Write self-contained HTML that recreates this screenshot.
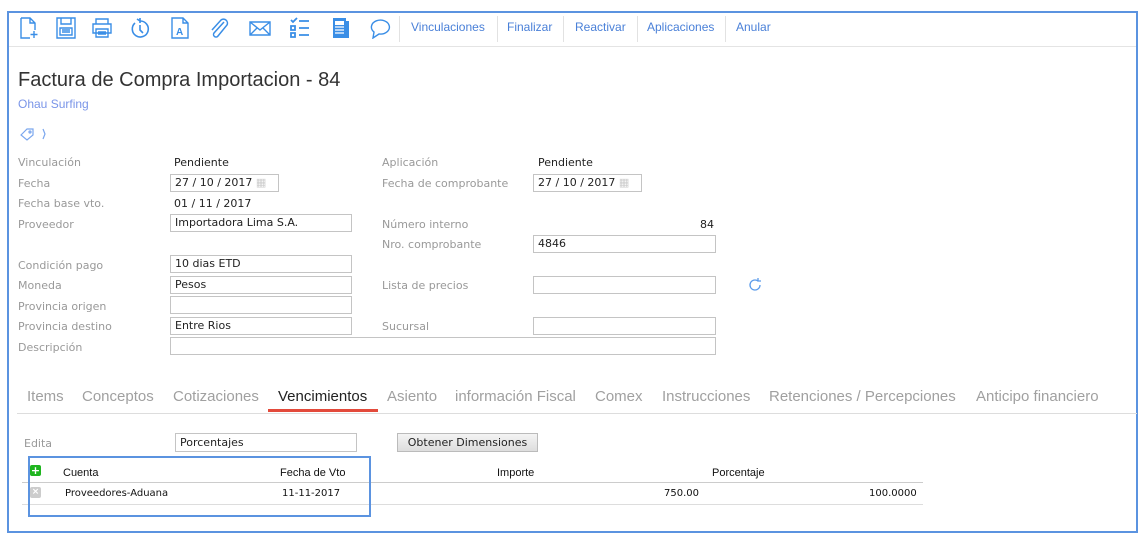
<!DOCTYPE html>
<html><head><meta charset="utf-8">
<style>
*{margin:0;padding:0;box-sizing:border-box}
body{width:1140px;height:540px;background:#fff;position:relative;overflow:hidden;font-family:"Liberation Sans",sans-serif}
.a{position:absolute;white-space:nowrap}
.frame{position:absolute;left:7px;top:11px;width:1131px;height:522px;border:2px solid #5b93e0}
.lbl{position:absolute;font:11px "DejaVu Sans",sans-serif;color:#999;white-space:nowrap}
.val{position:absolute;font:11px "DejaVu Sans",sans-serif;color:#222;white-space:nowrap}
.inp{position:absolute;height:18px;border:1px solid #c4c4c4;font:11px "DejaVu Sans",sans-serif;color:#222;padding:0 4px;line-height:16px;white-space:nowrap}
.lk{position:absolute;top:20px;font-size:12px;color:#4a80d8}
.sep{position:absolute;top:16px;width:1px;height:26px;background:#e2e2e2}
.tab{position:absolute;top:388px;font-size:15px;color:#a0a0a0}
svg.ic{position:absolute;top:17px}
.th{position:absolute;top:467px;font-size:11px;color:#111}
.td{position:absolute;top:488px;font:10px "DejaVu Sans",sans-serif;color:#111}
</style></head><body>
<div class="frame"></div>

<svg class="ic" style="left:18px" width="22" height="22" viewBox="0 0 22 22" fill="none" stroke="#3a8ee6" stroke-width="1.4"><path d="M3 1h9l5 5v7M3 1v20h9M12 1v5h5M16 14v7M12.5 17.5h7"/></svg>
<svg class="ic" style="left:55px" width="22" height="22" viewBox="0 0 22 22" fill="none" stroke="#3a8ee6" stroke-width="1.4"><path d="M2 1h18v20H2z M6 1v6h10V1 M5 11h12v7H5z M7 13h8M7 15h8"/></svg>
<svg class="ic" style="left:91px" width="22" height="22" viewBox="0 0 22 22" fill="none" stroke="#3a8ee6" stroke-width="1.4"><path d="M5 7V2h12v5 M2 7h18v9H2z M5 12h12v8H5z M7 15h8M7 17h8"/></svg>
<svg class="ic" style="left:129px" width="22" height="22" viewBox="0 0 22 22" fill="none" stroke="#3a8ee6" stroke-width="1.6"><path d="M6 6a8 8 0 1 0 5-2 M11 1v5 M8 2l3 2 M11 8v5l3 3"/></svg>
<svg class="ic" style="left:169px" width="22" height="22" viewBox="0 0 22 22" fill="none" stroke="#3a8ee6" stroke-width="1.4"><path d="M3 1h11l5 5v15H3z M14 1v5h5"/><text x="7" y="18" font-size="10" font-family="Liberation Sans" fill="#3a8ee6" stroke="none" font-weight="bold">A</text></svg>
<svg class="ic" style="left:208px" width="22" height="22" viewBox="0 0 22 22" fill="none" stroke="#3a8ee6" stroke-width="1.5"><path d="M16 5L6 16a2.5 2.5 0 0 0 4 3l9-11a4 4 0 0 0-6-5L4 13"/></svg>
<svg class="ic" style="left:248px" width="24" height="22" viewBox="0 0 24 22" fill="none" stroke="#3a8ee6" stroke-width="1.4"><path d="M2 5h20v13H2z M2 5l10 8 10-8 M2 18l7-7 M22 18l-7-7"/></svg>
<svg class="ic" style="left:289px" width="22" height="22" viewBox="0 0 22 22" fill="none" stroke="#3a8ee6" stroke-width="1.4"><path d="M2 3l2 2 4-4 M2 9h4v4H2z M2 16h4v4H2z M10 4h10M10 11h10M10 18h10" stroke-width="1.8"/></svg>
<svg class="ic" style="left:331px" width="22" height="22" viewBox="0 0 22 22"><path d="M2 1h13v20H2z" fill="#3a8ee6"/><path d="M4 4h9v4H4z" fill="#fff"/><path d="M4 10h9M4 13h9M4 16h9" stroke="#fff" stroke-width="1.2"/><path d="M15 4h3v17h-3z" fill="#3a8ee6"/></svg>
<svg class="ic" style="left:369px" width="24" height="22" viewBox="0 0 24 22" fill="none" stroke="#3a8ee6" stroke-width="1.4"><path d="M5 15A9 7 0 1 1 10 17L4 21Z"/></svg>
<div class="sep" style="left:399px"></div>
<div class="lk" style="left:411px">Vinculaciones</div>
<div class="sep" style="left:497px"></div>
<div class="lk" style="left:507px">Finalizar</div>
<div class="sep" style="left:563px"></div>
<div class="lk" style="left:575px">Reactivar</div>
<div class="sep" style="left:637px"></div>
<div class="lk" style="left:647px">Aplicaciones</div>
<div class="sep" style="left:725px"></div>
<div class="lk" style="left:736px">Anular</div>
<div class="a" style="left:9px;top:46px;width:1127px;height:1px;background:#e4e4e4"></div>

<div class="a" style="left:18px;top:69px;font-size:20px;color:#333">Factura de Compra Importacion - 84</div>
<div class="a" style="left:18px;top:97px;font-size:12px;color:#7a95e8">Ohau Surfing</div>
<svg class="a" style="left:19px;top:127px" width="30" height="14" viewBox="0 0 30 14" fill="none" stroke="#7aa6ee" stroke-width="1.2"><path d="M2 8L8 2h6v6l-6 5z"/><circle cx="11" cy="5" r="1"/><path d="M24 2l2 5-2 5"/></svg>

<div class="lbl" style="left:18px;top:156px">Vinculación</div><div class="val" style="left:174px;top:156px">Pendiente</div>
<div class="lbl" style="left:18px;top:177px">Fecha</div><div class="inp" style="left:170px;top:174px;width:109px">27 / 10 / 2017 <span style="color:#ccc">▦</span></div>
<div class="lbl" style="left:18px;top:197px">Fecha base vto.</div><div class="val" style="left:174px;top:197px">01 / 11 / 2017</div>
<div class="lbl" style="left:18px;top:218px">Proveedor</div><div class="inp" style="left:170px;top:214px;width:182px">Importadora Lima S.A.</div>
<div class="lbl" style="left:18px;top:259px">Condición pago</div><div class="inp" style="left:170px;top:255px;width:182px">10 dias ETD</div>
<div class="lbl" style="left:18px;top:279px">Moneda</div><div class="inp" style="left:170px;top:276px;width:182px">Pesos</div>
<div class="lbl" style="left:18px;top:300px">Provincia origen</div><div class="inp" style="left:170px;top:296px;width:182px"></div>
<div class="lbl" style="left:18px;top:320px">Provincia destino</div><div class="inp" style="left:170px;top:317px;width:182px">Entre Rios</div>
<div class="lbl" style="left:18px;top:341px">Descripción</div><div class="inp" style="left:170px;top:337px;width:546px"></div>

<div class="lbl" style="left:382px;top:156px">Aplicación</div><div class="val" style="left:538px;top:156px">Pendiente</div>
<div class="lbl" style="left:382px;top:177px">Fecha de comprobante</div><div class="inp" style="left:533px;top:174px;width:109px">27 / 10 / 2017 <span style="color:#ccc">▦</span></div>
<div class="lbl" style="left:382px;top:218px">Número interno</div><div class="val" style="left:700px;top:218px">84</div>
<div class="lbl" style="left:382px;top:238px">Nro. comprobante</div><div class="inp" style="left:533px;top:235px;width:183px">4846</div>
<div class="lbl" style="left:382px;top:279px">Lista de precios</div><div class="inp" style="left:533px;top:276px;width:183px"></div>
<svg class="a" style="left:747px;top:277px" width="16" height="16" viewBox="0 0 16 16" fill="none" stroke="#5b9bea" stroke-width="1.3"><path d="M13 8a5 5 0 1 1-2-4 M11 1v3h3"/></svg>
<div class="lbl" style="left:382px;top:320px">Sucursal</div><div class="inp" style="left:533px;top:317px;width:183px"></div>

<div class="tab" style="left:27px">Items</div>
<div class="tab" style="left:82px">Conceptos</div>
<div class="tab" style="left:173px">Cotizaciones</div>
<div class="tab" style="left:278px;color:#222">Vencimientos</div>
<div class="tab" style="left:387px">Asiento</div>
<div class="tab" style="left:455px">información Fiscal</div>
<div class="tab" style="left:595px">Comex</div>
<div class="tab" style="left:662px">Instrucciones</div>
<div class="tab" style="left:769px">Retenciones / Percepciones</div>
<div class="tab" style="left:976px">Anticipo financiero</div>
<div class="a" style="left:17px;top:413px;width:1120px;height:1px;background:#ddd"></div>
<div class="a" style="left:268px;top:409px;width:110px;height:3px;background:#e34a3b"></div>

<div class="lbl" style="left:24px;top:437px">Edita</div>
<div class="inp" style="left:175px;top:433px;width:182px;height:19px;line-height:17px">Porcentajes</div>
<div class="a" style="left:397px;top:433px;width:141px;height:19px;border:1px solid #bbb;background:linear-gradient(#f4f4f4,#ddd);font:11px 'DejaVu Sans',sans-serif;color:#222;text-align:center;line-height:17px">Obtener Dimensiones</div>

<div class="a" style="left:30px;top:465px;width:11px;height:11px;background:#1fb51f;border-radius:2px;color:#fff;font:bold 11px/11px 'DejaVu Sans';text-align:center">+</div>
<div class="th" style="left:63px">Cuenta</div>
<div class="th" style="left:280px">Fecha de Vto</div>
<div class="th" style="left:497px">Importe</div>
<div class="th" style="left:712px">Porcentaje</div>
<div class="a" style="left:22px;top:482px;width:901px;height:1px;background:#ccc"></div>
<div class="a" style="left:30px;top:487px;width:11px;height:11px;background:#ccc;border-radius:2px;color:#fff;font:bold 9px/11px 'DejaVu Sans';text-align:center">×</div>
<div class="td" style="left:65px">Proveedores-Aduana</div>
<div class="td" style="left:282px">11-11-2017</div>
<div class="td" style="left:664px">750.00</div>
<div class="td" style="left:869px">100.0000</div>
<div class="a" style="left:22px;top:504px;width:901px;height:1px;background:#ddd"></div>
<div class="a" style="left:28px;top:456px;width:343px;height:61px;border:2px solid #5b93e0"></div>
</body></html>
